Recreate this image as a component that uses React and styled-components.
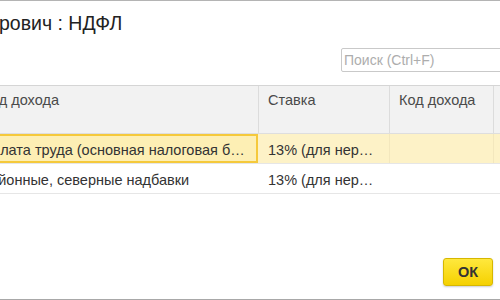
import React from 'react'
import styled, { createGlobalStyle } from 'styled-components'

const Global = createGlobalStyle`
	html, body {
		margin: 0;
		padding: 0;
		background: #fff;
	}
	body {
		font-family: "Liberation Sans", Arial, sans-serif;
		color: #333;
	}
`

const columns = [
	{ title: 'Вид дохода', width: 287 },
	{ title: 'Ставка', width: 131 },
	{ title: 'Код дохода', width: 104 },
	{ title: '', width: 60 },
]

const rows = [
	{ cells: ['Оплата труда (основная налоговая б…', '13% (для нер…', '', ''], selected: true },
	{ cells: ['Районные, северные надбавки', '13% (для нер…', '', ''], selected: false },
]

const App = () => {
	return (
		<>
			<Global />
			<Window>
				<Title>рович : НДФЛ</Title>
				<Toolbar>
					<Search placeholder="Поиск (Ctrl+F)" />
				</Toolbar>
				<Table>
					<HeaderRow>
						{columns.map((c, i) => (
							<HeaderCell key={i} $w={c.width}>{c.title}</HeaderCell>
						))}
					</HeaderRow>
					{rows.map((r, ri) => (
						<Row key={ri} $selected={r.selected}>
							{r.cells.map((text, ci) => (
								<Cell
									key={ci}
									$w={columns[ci].width}
									$selected={r.selected}
									$focused={r.selected && ci === 0}
								>
									{text}
								</Cell>
							))}
						</Row>
					))}
				</Table>
				<Footer>
					<OkButton>ОК</OkButton>
				</Footer>
			</Window>
		</>
	)
}

export default App

const Window = styled.div`
	width: 500px;
	height: 300px;
	box-sizing: border-box;
	border-top: 1px solid #b4b4b4;
	border-bottom: 1px solid #a8a8a8;
	overflow: hidden;
	display: flex;
	flex-direction: column;
`

const Title = styled.div`
	padding-top: 11px;
	margin-left: -1px;
	font-size: 19.5px;
	line-height: 22px;
	color: #222;
	white-space: nowrap;
`

const Toolbar = styled.div`
	display: flex;
	justify-content: flex-end;
	margin-top: 14px;
	margin-right: -20px;
`

const Search = styled.input`
	width: 179px;
	height: 24px;
	box-sizing: border-box;
	border: 1px solid #c9c9c9;
	border-radius: 2px;
	padding: 0 2px;
	font-family: inherit;
	font-size: 14px;
	outline: none;
	&::placeholder {
		color: #adadad;
	}
`

const Table = styled.div`
	margin-top: 13px;
	margin-left: -28px;
	border-top: 1px solid #d5d5d5;
	font-size: 14.5px;
	white-space: nowrap;
`

const HeaderRow = styled.div`
	display: flex;
	height: 47px;
	background: #f2f2f2;
	border-bottom: 1px solid #dedede;
`

const HeaderCell = styled.div`
	flex: 0 0 ${p => p.$w}px;
	box-sizing: border-box;
	padding: 6px 9px 0;
	color: #4a4a4a;
	border-right: 1px solid #dcdcdc;
	overflow: hidden;
	line-height: 17px;
`

const Row = styled.div`
	display: flex;
	height: 29px;
	background: ${p => (p.$selected ? '#fdf2c7' : '#fff')};
	border-bottom: 1px solid #e6e6e6;
`

const Cell = styled.div`
	flex: 0 0 ${p => p.$w}px;
	box-sizing: border-box;
	display: flex;
	align-items: center;
	padding: 2px ${p => (p.$focused ? 7 : 9)}px 0;
	border-right: 1px solid ${p => (p.$selected ? '#f3e7bd' : '#fff')};
	overflow: hidden;
	color: #333;
	${p =>
		p.$focused &&
		`
		border: 2px solid #f5c93b;
		background: #fdefb4;
		margin-right: 1px;
		flex-basis: ${p.$w - 1}px;
	`}
`

const Footer = styled.div`
	margin-top: auto;
	display: flex;
	justify-content: flex-end;
	padding: 0 7px 13px 0;
`

const OkButton = styled.button`
	width: 50px;
	height: 28px;
	box-sizing: border-box;
	border: 1px solid #d6b700;
	border-radius: 3px;
	background: linear-gradient(#ffe83d, #f5d100);
	box-shadow: 0 1px 2px rgba(0, 0, 0, 0.2);
	font-family: "Liberation Sans", Arial, sans-serif;
	font-size: 14.5px;
	font-weight: bold;
	color: #333;
	padding: 0;
`
